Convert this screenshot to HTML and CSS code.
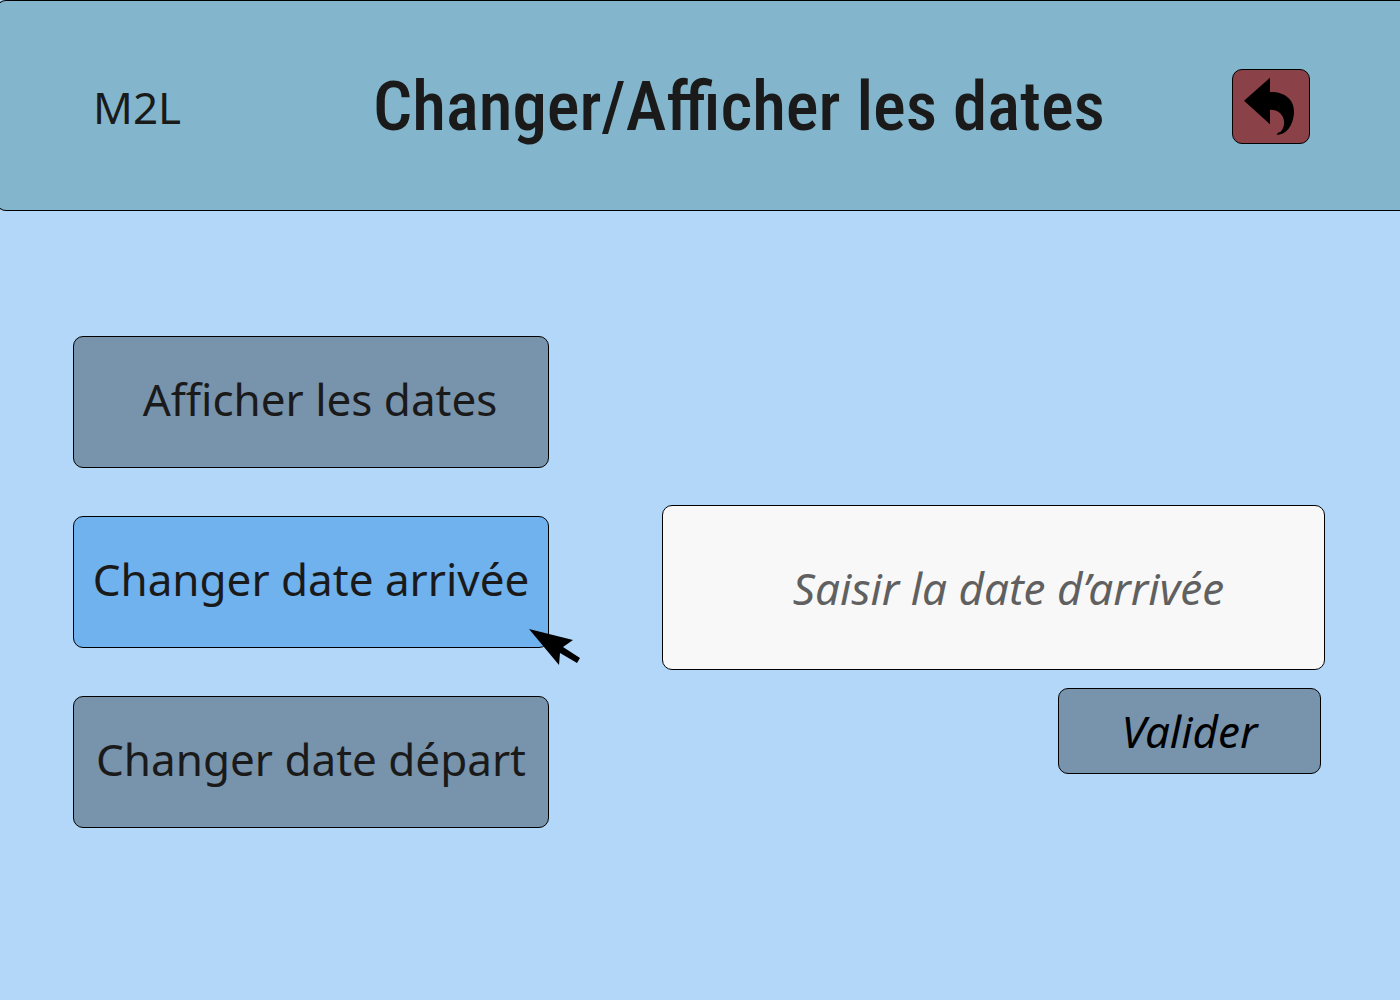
FILE: index.html
```html
<!DOCTYPE html>
<html lang="fr">
<head>
<meta charset="utf-8">
<meta name="viewport" content="width=device-width, initial-scale=1">
<title>M2L - Changer/Afficher les dates</title>
<link rel="stylesheet" href="styles.css">
</head>
<body>
<header class="banner">
  <span class="brand">M2L</span>
  <h1 class="title">Changer/Afficher les dates</h1>
  <button class="back" type="button" aria-label="Retour">
    <svg class="back-icon" viewBox="0 0 228 219" aria-hidden="true">
      <path d="M33 92 L111 23 V66 C156 65 183 89 183 124 C183 160 163 195 134 194 L130 193 L136 190 L132 189 L142 186 C164 164 155 119 111 119 V163 Z"/>
    </svg>
  </button>
</header>
<main class="content">
  <nav class="actions" aria-label="Dates">
    <button class="action action-show" type="button">Afficher les dates</button>
    <div class="action-slot">
      <button class="action action-active" type="button">Changer date arrivée</button>
      <svg class="pointer" viewBox="0 0 52 37" aria-hidden="true">
        <path d="M0 0 L44 11 L34 18 L51 29 L48 34 L31 24 L30 36 Z"/>
      </svg>
    </div>
    <button class="action" type="button">Changer date départ</button>
  </nav>
  <form class="entry">
    <input class="date" type="text" aria-label="Date d’arrivée" placeholder="Saisir la date d’arrivée">
    <button class="submit" type="button">Valider</button>
  </form>
</main>
</body>
</html>
```
FILE: styles.css
```css
* {
  box-sizing: border-box;
}

body {
  margin: 0;
  background: #b2d7f8;
  color: #1a1a1a;
  font-family: "Noto Sans", "Open Sans", sans-serif;
  font-size: 44px;
  line-height: 64px;
}

button,
input {
  margin: 0;
  border: 1px solid #000;
  border-radius: 10px;
  color: inherit;
  font: inherit;
}

button {
  padding: 0;
  background: #7893ac;
  cursor: pointer;
}

.banner {
  display: grid;
  grid-template-columns: 280px 1fr auto;
  align-items: center;
  min-height: 211px;
  margin-left: -4px;
  padding: 2px 90px 0 96px;
  border: 1px solid #000;
  border-right: 0;
  border-radius: 10px 0 0 10px;
  background: #83b6cd;
}

.title {
  margin: 0;
  font-family: "Roboto Condensed", Roboto, sans-serif;
  font-size: 69px;
  font-weight: 500;
  line-height: 80px;
  white-space: nowrap;
}

.back {
  width: 78px;
  height: 75px;
  background: #8b4148;
}

.back-icon {
  display: block;
  width: 100%;
  fill: #000;
}

.content {
  display: grid;
  grid-template-columns: 476fr 663fr;
  gap: 113px;
  padding: 125px 75px 48px 73px;
}

.actions {
  display: flex;
  flex-direction: column;
  gap: 48px;
}

.action {
  width: 100%;
  min-height: 132px;
  padding-bottom: 6px;
  white-space: nowrap;
}

.action-show {
  padding-left: 18px;
}

.action-active {
  background: #70b2ed;
}

.action-slot {
  display: flex;
  position: relative;
}

.pointer {
  position: absolute;
  right: -32px;
  bottom: -18px;
  width: 52px;
  height: 37px;
  fill: #000;
}

.entry {
  display: flex;
  flex-direction: column;
  gap: 18px;
  padding-top: 169px;
}

.date {
  width: 100%;
  height: 165px;
  padding: 0 0 0 30px;
  background: #f8f8f8;
  font-style: italic;
  text-align: center;
}

.date::placeholder {
  color: #606060;
  opacity: 1;
}

.submit {
  align-self: flex-end;
  width: 263px;
  min-height: 86px;
  margin-right: 4px;
  color: #000;
  font-style: italic;
}
```
